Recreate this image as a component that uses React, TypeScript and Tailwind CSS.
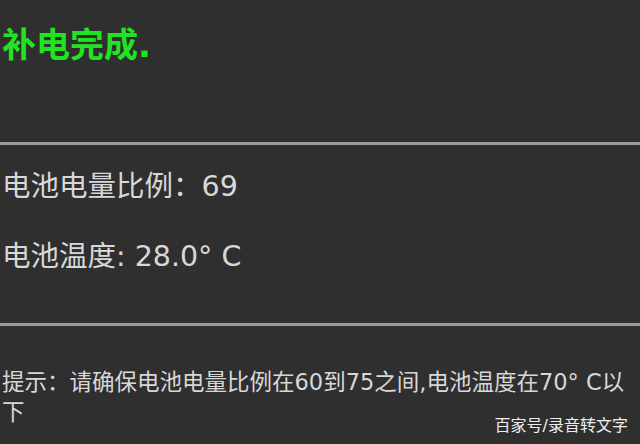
import React from 'react';

const font = { fontFamily: '"DejaVu Sans", "Noto Sans CJK SC", sans-serif' };

const App: React.FC = () => {
  return (
    <div className="relative w-[640px] h-[444px] overflow-hidden bg-[#2f2f2f]" style={font}>
      <div className="pl-[2px] pt-[25px] text-[34px] leading-[40px] font-bold text-[#22e322]">补电完成.</div>
      <div className="mt-[77px] h-[3px] bg-[#9c9c9c]" />
      <div className="pl-[2px] mt-[22px] text-[28.5px] leading-[40px] text-[#d8d8d8]">电池电量比例：69</div>
      <div className="pl-[2px] mt-[30px] text-[28.5px] leading-[40px] text-[#d8d8d8]">电池温度: 28.0° C</div>
      <div className="mt-[46px] h-[3px] bg-[#9c9c9c]" />
      <div className="pl-[2px] mt-[41px] flex flex-col items-start text-[22.5px] leading-[30px] text-[#d8d8d8]">
        <span className="whitespace-nowrap">提示：请确保电池电量比例在60到75之间,电池温度在70° C以</span>
        <span>下</span>
      </div>
      <div className="absolute right-[12px] bottom-[10px] text-[16px] leading-[16px] text-[#eeeeee]">百家号/录音转文字</div>
    </div>
  );
};

export default App;
